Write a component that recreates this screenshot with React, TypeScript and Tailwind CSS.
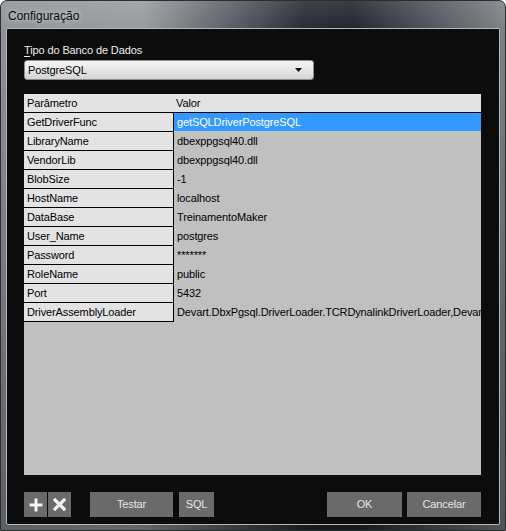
import React from "react";

const rows: [string, string][] = [
  ["GetDriverFunc", "getSQLDriverPostgreSQL"],
  ["LibraryName", "dbexppgsql40.dll"],
  ["VendorLib", "dbexppgsql40.dll"],
  ["BlobSize", "-1"],
  ["HostName", "localhost"],
  ["DataBase", "TreinamentoMaker"],
  ["User_Name", "postgres"],
  ["Password", "*******"],
  ["RoleName", "public"],
  ["Port", "5432"],
  ["DriverAssemblyLoader", "Devart.DbxPgsql.DriverLoader.TCRDynalinkDriverLoader,Devart"],
];

function Btn({ w, children }: { w: string; children: React.ReactNode }) {
  return (
    <div className={`${w} h-[25px] bg-[#6a6a6a] text-[#e6e6e6] flex items-center justify-center text-[11px]`}>
      {children}
    </div>
  );
}

export default function App() {
  return (
    <div className="w-[506px] h-[531px] overflow-hidden font-['Liberation_Sans',Arial,sans-serif] tracking-[-0.12px]">
      <div className="w-[506px] h-[531px] rounded-t-[7px] border border-[#2a2e33] flex flex-col bg-[linear-gradient(180deg,rgba(255,255,255,0.12)_0%,rgba(0,0,0,0)_6%,rgba(0,0,0,0.35)_100%),linear-gradient(90deg,#8f9397_0%,#979b9f_28%,#5a5f66_45%,#252a31_60%,#1f242b_70%,#4a4f56_84%,#7c8186_100%)]">
        <div className="h-[27px] flex items-center pl-[7px] pt-[2px] text-[12px] text-[#0a0a0a] tracking-normal [text-shadow:0_0_6px_rgba(255,255,255,0.75)]">
          Configuração
        </div>
        <div className="ml-[5px] w-[494px] h-[497px] border border-[#b4b8bc] rounded-[2px] bg-[#0c0c0c] flex flex-col pl-[17px]">
          <div className="mt-[15px] h-[13px] leading-[13px] text-[11px] text-[#ececec]">
            <span className="underline underline-offset-[2px]">T</span>ipo do Banco de Dados
          </div>
          <div className="mt-[3px] w-[290px] h-[20px] rounded-[3px] border border-[#8c8c8c] bg-[linear-gradient(180deg,#f4f4f4_0%,#e6e6e6_50%,#d4d4d4_100%)] flex items-center pl-[3px] pr-[10px] text-[11px] text-black">
            <span className="flex-1">PostgreSQL</span>
            <svg width="8" height="5" viewBox="0 0 8 5">
              <path d="M0 0 H7 L3.5 4 Z" fill="#111" />
            </svg>
          </div>
          <div className="mt-[14px] w-[457px] h-[381px] bg-[#c0c0c0] flex flex-col overflow-hidden text-[11px] text-black">
            <div className="h-[19px] shrink-0 flex bg-[#e3e3e3] border-b border-black">
              <div className="w-[150px] pl-[3px] flex items-center">Parâmetro</div>
              <div className="flex-1 pl-[2px] flex items-center">Valor</div>
            </div>
            {rows.map(([k, v], i) => (
              <div key={k} className="h-[19px] shrink-0 flex">
                <div className="w-[150px] h-[19px] shrink-0 bg-[#e3e3e3] border-b border-r border-black pl-[3px] flex items-center whitespace-nowrap">
                  {k}
                </div>
                <div
                  className={
                    i === 0
                      ? "flex-1 h-[18px] bg-[#3399ff] text-white pl-[3px] flex items-center whitespace-nowrap overflow-hidden"
                      : "flex-1 h-[18px] pl-[3px] flex items-center whitespace-nowrap overflow-hidden"
                  }
                >
                  {v}
                </div>
              </div>
            ))}
          </div>
          <div className="mt-[17px] flex items-center w-[457px]">
            <div className="w-[23px] h-[25px] bg-[#6a6a6a] flex items-center justify-center">
              <svg width="14" height="14" viewBox="0 0 14 14">
                <rect x="5.5" y="0.5" width="3" height="13" fill="#f2f2f2" />
                <rect x="0.5" y="5.5" width="13" height="3" fill="#f2f2f2" />
              </svg>
            </div>
            <div className="ml-[1px] w-[23px] h-[25px] bg-[#6a6a6a] flex items-center justify-center">
              <svg width="13" height="13" viewBox="0 0 13 13">
                <path d="M2 2 L11 11 M11 2 L2 11" stroke="#f2f2f2" strokeWidth="3.2" strokeLinecap="square" />
              </svg>
            </div>
            <div className="ml-[19px]">
              <Btn w="w-[83px]">Testar</Btn>
            </div>
            <div className="ml-[6px]">
              <Btn w="w-[35px]">SQL</Btn>
            </div>
            <div className="flex-1" />
            <Btn w="w-[75px]">OK</Btn>
            <div className="ml-[5px]">
              <Btn w="w-[74px]">Cancelar</Btn>
            </div>
          </div>
        </div>
      </div>
    </div>
  );
}
